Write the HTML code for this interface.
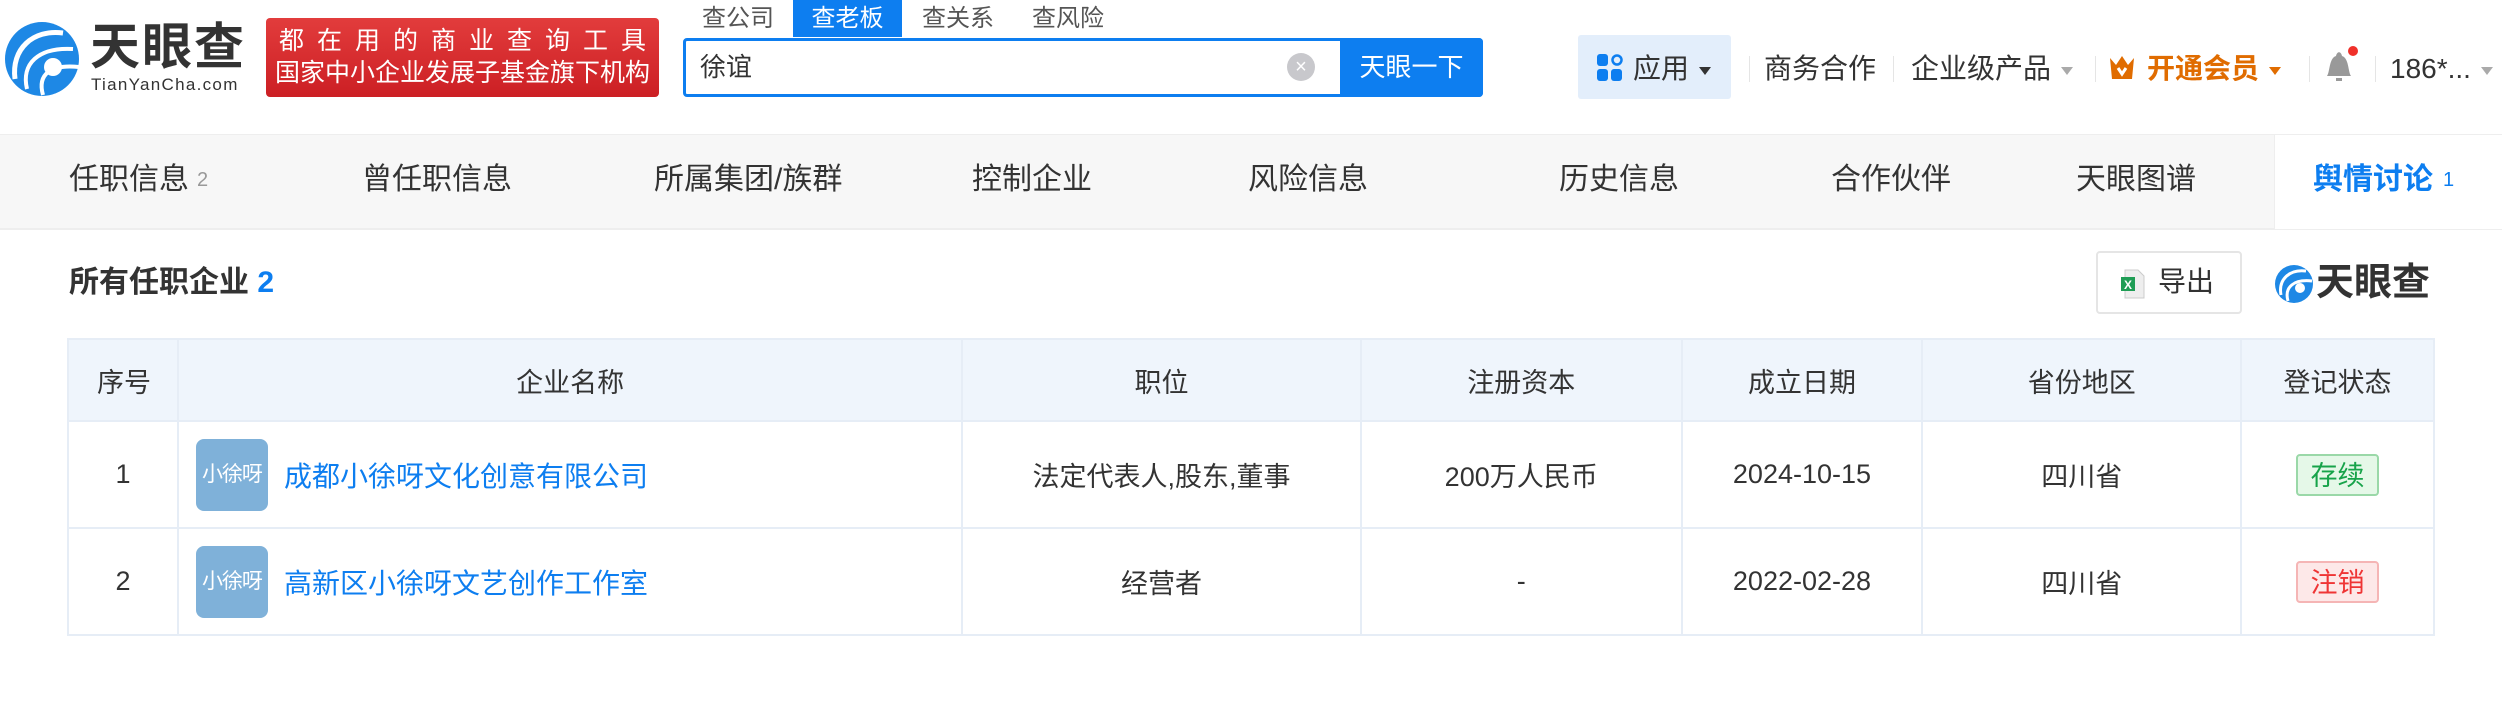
<!DOCTYPE html>
<html><head><meta charset="utf-8"><style>
*{margin:0;padding:0;box-sizing:border-box}
body{width:2502px;height:708px;background:#fff;font-family:"Liberation Sans","Noto Sans CJK SC",sans-serif;color:#333;position:relative;overflow:hidden}
.a{position:absolute;white-space:nowrap}
.nav{font-size:28px;color:#333;top:50px;line-height:38px}
.sep{position:absolute;top:56px;width:1px;height:26px;background:#e5e5e5}
.tri{display:inline-block;width:0;height:0;border-left:6px solid transparent;border-right:6px solid transparent;border-top:8px solid #999;vertical-align:middle;margin-left:10px}
.tab{position:absolute;top:160px;font-size:30px;color:#333;line-height:40px}
table{position:absolute;left:67px;top:338px;width:2368px;border-collapse:collapse;font-size:27px;color:#333}
td,th{border:2px solid #e6edf6;text-align:center;font-weight:normal}
th{background:#eff5fc;height:82px}
td{height:107px}
.av{display:inline-block;width:72px;height:72px;background:#7fb1d9;border-radius:8px;color:#fff;font-size:21px;line-height:72px;text-align:center;vertical-align:middle;overflow:hidden;letter-spacing:-1px}
.cn{color:#0d7ef0;vertical-align:middle;margin-left:16px;font-size:28px}
.bd{display:inline-block;width:83px;height:42px;line-height:40px;border-radius:4px;font-size:27px}
</style></head><body>
<svg class="a" style="left:3px;top:19px" width="78" height="80" viewBox="0 0 78 80">
<circle cx="39" cy="40" r="37" fill="#1e88e5"/>
<path d="M12 60 C8 30 30 10 60 14" stroke="#fff" stroke-width="5" fill="none"/>
<path d="M24 70 C18 45 35 28 70 30" stroke="#fff" stroke-width="4" fill="none"/>
<path d="M40 76 C34 55 48 45 76 48" stroke="#fff" stroke-width="4" fill="none"/>
<circle cx="50" cy="48" r="9" fill="#fff"/>
</svg>
<div class="a" style="left:90px;top:20px;font-size:50px;font-weight:bold;color:#333;line-height:54px;letter-spacing:2px">天眼查</div>
<div class="a" style="left:91px;top:75px;font-size:17px;color:#333;letter-spacing:1.3px">TianYanCha.com</div>
<div class="a" style="left:266px;top:18px;width:393px;height:79px;background:linear-gradient(#e23c3c,#cc1f24);border-radius:4px;color:#fff;line-height:32px;text-align:center;padding-top:7px">
<div style="letter-spacing:13px;margin-left:13px;font-size:25px">都在用的商业查询工具</div><div style="font-size:25px;letter-spacing:0">国家中小企业发展子基金旗下机构</div></div>
<div class="a" style="left:702px;top:2px;font-size:24px;color:#555;line-height:34px">查公司</div>
<div class="a" style="left:793px;top:0;width:109px;height:37px;background:#0d7ef0;color:#fff;font-size:24px;line-height:38px;text-align:center">查老板</div>
<div class="a" style="left:922px;top:2px;font-size:24px;color:#555;line-height:34px">查关系</div>
<div class="a" style="left:1032px;top:2px;font-size:24px;color:#555;line-height:34px">查风险</div>
<div class="a" style="left:683px;top:38px;width:800px;height:59px;border:3px solid #0d7ef0;border-radius:4px;background:#fff"></div>
<div class="a" style="left:700px;top:48px;font-size:26px;color:#333;line-height:38px">徐谊</div>
<div class="a" style="left:1287px;top:53px;width:28px;height:28px;border-radius:50%;background:#c8c8cc;color:#fff;font-size:20px;line-height:28px;text-align:center">×</div>
<div class="a" style="left:1340px;top:38px;width:143px;height:59px;background:#0d7ef0;color:#fff;font-size:26px;line-height:59px;text-align:center;border-radius:0 4px 4px 0">天眼一下</div>
<div class="a" style="left:1578px;top:35px;width:153px;height:64px;background:#e3eefb;border-radius:3px"></div>
<svg class="a" style="left:1597px;top:54px" width="26" height="28"><rect x="0" y="0" width="11" height="12" rx="3" fill="#0d7ef0"/><circle cx="20" cy="6" r="4.5" fill="none" stroke="#0d7ef0" stroke-width="2.5"/><rect x="0" y="15" width="11" height="12" rx="3" fill="#0d7ef0"/><rect x="14" y="15" width="11" height="12" rx="3" fill="#0d7ef0"/></svg>
<div class="a nav" style="left:1633px">应用<span class="tri" style="border-top-color:#333"></span></div>
<div class="sep" style="left:1749px"></div>
<div class="a nav" style="left:1764px">商务合作</div>
<div class="sep" style="left:1893px"></div>
<div class="a nav" style="left:1911px">企业级产品<span class="tri" style="border-top-color:#aaa"></span></div>
<div class="sep" style="left:2095px"></div>
<svg class="a" style="left:2108px;top:55px" width="28" height="26"><path d="M2 3 L8 10 L14 1 L20 10 L26 3 L24 24 L4 24 Z" fill="#e06c00"/><path d="M10 13 L14 19 L18 13" stroke="#fff" stroke-width="3" fill="none"/></svg>
<div class="a nav" style="left:2147px;color:#e06c00;font-weight:bold">开通会员<span class="tri" style="border-top-color:#e06c00"></span></div>
<div class="sep" style="left:2309px"></div>
<svg class="a" style="left:2322px;top:46px" width="36" height="38"><path d="M5 30 C8 26 7 12 14 10 C15 5 19 5 20 10 C27 12 26 26 29 30 Z" fill="#999"/><rect x="14" y="32" width="6" height="3" fill="#999"/><circle cx="31" cy="5" r="5" fill="#f0302a"/></svg>
<div class="sep" style="left:2375px"></div>
<div class="a nav" style="left:2390px">186*...<span class="tri" style="border-top-color:#aaa"></span></div>
<div class="a" style="left:0;top:134px;width:2502px;height:96px;background:#f7f7f7;border-top:1px solid #eee;border-bottom:2px solid #eee"></div>
<div class="a" style="left:2274px;top:135px;width:228px;height:94px;background:#fff;border-left:1px solid #eee"></div>
<div class="tab" style="left:69px">任职信息<span style="font-size:20px;color:#999;margin-left:8px;vertical-align:top">2</span></div>
<div class="tab" style="left:362px">曾任职信息</div>
<div class="tab" style="left:654px">所属集团/族群</div>
<div class="tab" style="left:972px">控制企业</div>
<div class="tab" style="left:1248px">风险信息</div>
<div class="tab" style="left:1559px">历史信息</div>
<div class="tab" style="left:1831px">合作伙伴</div>
<div class="tab" style="left:2076px">天眼图谱</div>
<div class="tab" style="left:2313px;color:#0d7ef0;font-weight:bold">舆情讨论<span style="font-size:20px;font-weight:normal;margin-left:10px;vertical-align:top">1</span></div>
<div class="a" style="left:69px;top:263px;font-size:30px;font-weight:bold;color:#333;line-height:40px">所有任职企业 <span style="color:#0d7ef0">2</span></div>
<div class="a" style="left:2096px;top:251px;width:146px;height:63px;border:2px solid #e5e5e5;border-radius:4px;background:#fff"></div>
<svg class="a" style="left:2120px;top:269px" width="26" height="30"><path d="M5 1 H18 L24 7 V29 H5 Z" fill="#eee" stroke="#ccc"/><rect x="1" y="8" width="14" height="14" fill="#1f9d55"/><text x="4" y="20" font-size="12" fill="#fff" font-family="Liberation Sans" font-weight="bold">X</text></svg>
<div class="a" style="left:2158px;top:263px;font-size:28px;color:#333;line-height:38px">导出</div>
<svg class="a" style="left:2274px;top:263px" width="40" height="42"><circle cx="20" cy="21" r="19" fill="#1e88e5"/><path d="M7 32 C4 16 16 6 32 8" stroke="#fff" stroke-width="3" fill="none"/><path d="M14 38 C10 24 20 16 38 18" stroke="#fff" stroke-width="3" fill="none"/><circle cx="26" cy="25" r="5" fill="#fff"/></svg>
<div class="a" style="left:2316px;top:259px;font-size:38px;font-weight:bold;color:#333;line-height:48px">天眼查</div>
<table>
<tr><th style="width:110px;text-align:left;padding-left:28px">序号</th><th style="width:785px">企业名称</th><th style="width:399px">职位</th><th style="width:321px">注册资本</th><th style="width:241px">成立日期</th><th style="width:319px">省份地区</th><th style="width:193px">登记状态</th></tr>
<tr><td>1</td><td style="text-align:left;padding-left:17px"><span class="av">小徐呀</span><span class="cn">成都小徐呀文化创意有限公司</span></td><td>法定代表人,股东,董事</td><td>200万人民币</td><td>2024-10-15</td><td>四川省</td><td><span class="bd" style="background:#e5f8e8;border:2px solid #9ad8a8;color:#17a34a">存续</span></td></tr>
<tr><td>2</td><td style="text-align:left;padding-left:17px"><span class="av">小徐呀</span><span class="cn">高新区小徐呀文艺创作工作室</span></td><td>经营者</td><td>-</td><td>2022-02-28</td><td>四川省</td><td><span class="bd" style="background:#fde8e8;border:2px solid #f5b5b5;color:#ef3535">注销</span></td></tr>
</table>
</body></html>
